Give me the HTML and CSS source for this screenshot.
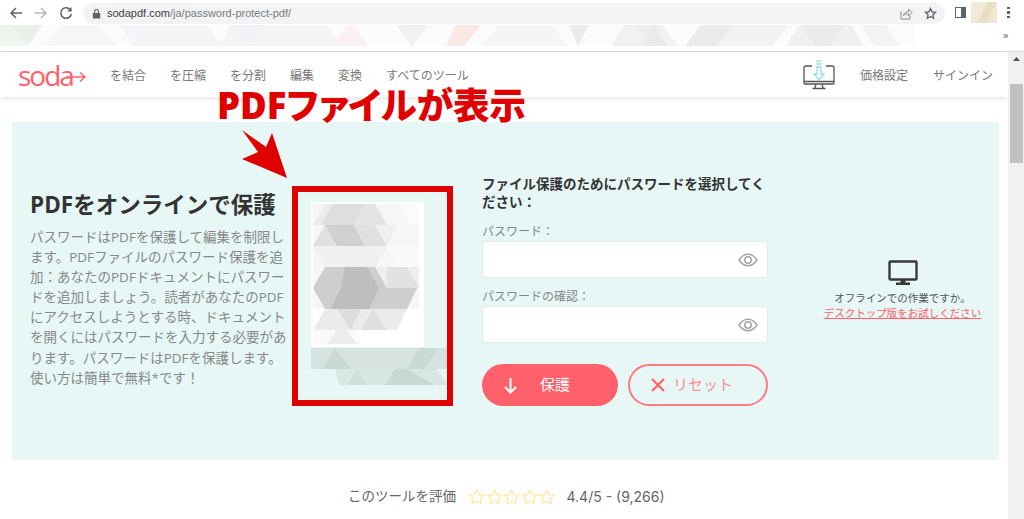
FILE: index.html
```html
<!DOCTYPE html>
<html lang="ja">
<head>
    <meta charset="UTF-8">
    <title>PDFをオンラインで保護</title>
    <link rel="stylesheet" href="styles.css">
</head>
<body>
    <div class="toolbar">
        <svg class="tool-icon" width="14" height="14" viewBox="0 0 14 14"><path d="M13 7H2M7 2L2 7l5 5" fill="none" stroke="#5f6368" stroke-width="1.5"/></svg>
        <svg class="tool-icon" width="14" height="14" viewBox="0 0 14 14"><path d="M1 7h11M7 2l5 5-5 5" fill="none" stroke="#b4b7ba" stroke-width="1.5"/></svg>
        <svg class="tool-icon" width="14" height="14" viewBox="0 0 14 14"><path d="M11.6 4.2A5.3 5.3 0 1 0 12.3 8" fill="none" stroke="#5f6368" stroke-width="1.5"/><path d="M12.6 1v4.4H8.2z" fill="#5f6368"/></svg>
        <div class="omnibox">
            <svg width="9" height="11" viewBox="0 0 9 11"><path d="M2 5V3.4a2.5 2.5 0 0 1 5 0V5h1.2v5.6H.8V5zm1.2 0h2.6V3.4a1.3 1.3 0 0 0-2.6 0z" fill="#5f6368"/></svg>
            <span class="url"><b>sodapdf.com</b>/ja/password-protect-pdf/</span>
            <span class="omni-right">
                <svg width="13" height="13" viewBox="0 0 13 13"><path d="M1 4.5v7.5h9V9M3.5 8.5C4 6 6 4.5 8.5 4.5V2L12 5.5 8.5 9V6.8C6.500 6.800 5 7.300 3.500 8.500z" fill="none" stroke="#8a8d91" stroke-width="1"/></svg>
                <svg width="13" height="13" viewBox="0 0 24 24"><path d="M12 3l2.800 6 6.500.8-4.800 4.400 1.300 6.500L12 17.400l-5.800 3.300 1.300-6.500L2.700 9.800 9.200 9z" fill="none" stroke="#5f6368" stroke-width="2.400"/></svg>
            </span>
        </div>
        <div class="side-icon"></div>
        <div class="avatar"></div>
        <div class="dots"><i></i><i></i><i></i></div>
    </div>
    <div class="bookmarks">
        <svg class="bookmark-mosaic" width="914" height="21" viewBox="0 0 914 21">
            <rect width="914" height="21" fill="#fbfbfb"/>
            <g class="soft">
                <polygon points="0,-2 42,-2 22,23 0,23" fill="#f0f4ef"/>
                <polygon points="10,-2 28,21 44,-2" fill="#eaf1ea"/>
                <polygon points="44,23 62,-2 98,-2 118,23" fill="#f6f6f6"/>
                <polygon points="150,-2 205,-2 225,23 130,23" fill="#f4f4f6"/>
                <polygon points="118,-2 150,-2 134,21" fill="#f3f5f8"/>
                <polygon points="232,-2 270,-2 285,23 218,23" fill="#f4f4f4"/>
                <polygon points="232,-2 250,21 268,-2" fill="#f0f2f7"/>
                <polygon points="268,-2 325,-2 342,23 252,23" fill="#f4f4f4"/>
                <polygon points="330,23 350,-2 370,23" fill="#fbf1f5"/>
                <polygon points="395,-2 430,-2 412,21" fill="#f1f1f1"/>
                <polygon points="456,-2 483,-2 462,23 446,23" fill="#fbe7e4"/>
                <polygon points="500,-2 550,-2 570,23 480,23" fill="#f5f5f5"/>
                <polygon points="568,-2 590,-2 578,21" fill="#eaebec"/>
                <polygon points="625,-2 660,-2 680,23 610,23" fill="#f1f1f1"/>
                <polygon points="632,-2 665,-2 648,21" fill="#eeeeee"/>
                <polygon points="642,23 654,-2 668,23" fill="#e9eaea"/>
                <polygon points="684,23 702,-2 735,-2 720,23" fill="#eaebeb"/>
                <polygon points="735,-2 790,-2 770,23 715,23" fill="#f2f2f2"/>
                <polygon points="800,-2 850,-2 865,23 785,23" fill="#f0f0f0"/>
                <polygon points="800,-2 815,21 830,21 845,-2" fill="#ebebeb"/>
                <polygon points="860,-2 885,-2 900,23 875,23" fill="#f3f3f3"/>
            </g>
        </svg>
        <span class="more">»</span>
    </div>
    <div class="page">
        <div class="content">
            <header class="nav">
                <a class="logo">soda<svg width="21" height="12" viewBox="0 0 21 12"><path d="M0 6h19M14 1.500l5 4.500-5 4.500" fill="none" stroke="#ff6069" stroke-width="1.500"/></svg></a>
                <nav class="nav-links">
                    <a>を結合</a><a>を圧縮</a><a>を分割</a><a>編集</a><a>変換</a><a>すべてのツール</a>
                </nav>
                <div class="nav-right">
                    <svg class="download-icon" width="32" height="30" viewBox="0 0 32 30">
                        <path d="M9 6H3a2 2 0 0 0-2 2v15a1 1 0 0 0 1 1h28a1 1 0 0 0 1-1V8a2 2 0 0 0-2-2h-6" fill="none" stroke="#555" stroke-width="1.300"/>
                        <path d="M1 21.500h30M13 24l-1 4M19 24l1 4M9.500 28.500h13" fill="none" stroke="#555" stroke-width="1.300"/>
                        <path d="M13.500 1h5M13.500 4h5M14 7h4v7h3l-5 6-5-6h3z" fill="none" stroke="#8fe3d9" stroke-width="1.300"/>
                    </svg>
                    <a class="price">価格設定</a>
                    <a>サインイン</a>
                </div>
            </header>
            <main class="panel">
                <section class="intro">
                    <h1>PDFをオンラインで保護</h1>
                    <p>パスワードはPDFを保護して編集を制限します。PDFファイルのパスワード保護を追加：あなたのPDFドキュメントにパスワードを追加しましょう。読者があなたのPDFにアクセスしようとする時、ドキュメントを開くにはパスワードを入力する必要があります。パスワードはPDFを保護します。使い方は簡単で無料*です！</p>
                </section>
                <section class="preview">
                    <svg class="thumb" width="113" height="145" viewBox="0 0 113 145">
                        <rect width="113" height="145" fill="#fff"/>
                        <g class="soft">
                            <polygon points="2,2 100,2 108,23 108,107 2,107" fill="#f6f6f6"/>
                            <polygon points="14,2 64,2 76,23 2,23" fill="#ececec"/>
                            <polygon points="22,2 54,2 42,23 10,23" fill="#dedede"/>
                            <polygon points="54,2 64,2 76,23 42,23" fill="#e4e4e4"/>
                            <polygon points="90,2 108,2 108,23 100,23" fill="#fbfbfb"/>
                            <polygon points="2,44 14,23 64,23 76,44" fill="#e0e0e0"/>
                            <polygon points="14,23 42,23 54,44 26,44" fill="#d0d0d0"/>
                            <polygon points="64,23 76,44 86,23" fill="#efefef"/>
                            <polygon points="2,44 76,44 64,65 14,65" fill="#f0f0f0"/>
                            <polygon points="76,44 108,44 108,65 86,65" fill="#fafafa"/>
                            <polygon points="14,65 108,65 108,86 2,86" fill="#eeeeee"/>
                            <polygon points="76,65 96,65 108,86 76,86" fill="#e2e2e2"/>
                            <polygon points="2,86 14,65 64,65 76,86 106,86 96,107 14,107" fill="#cecece"/>
                            <polygon points="34,65 56,65 68,86 58,107 20,107 30,86" fill="#bebebe"/>
                            <polygon points="2,128 14,107 26,128" fill="#ececec"/>
                            <polygon points="14,107 96,107 86,128 14,128" fill="#ebebeb"/>
                            <polygon points="26,107 50,107 40,128" fill="#dddddd"/>
                            <polygon points="62,107 76,128 50,128" fill="#dfdfdf"/>
                            <polygon points="2,128 46,128 50,142 2,142" fill="#fafafa"/>
                            <polygon points="16,142 26,128 36,128 46,142" fill="#ededed"/>
                        </g>
                    </svg>
                    <svg class="strip" width="136" height="40" viewBox="0 0 136 40">
                        <g class="soft">
                            <polygon points="0,1 136,1 136,22 0,22" fill="#d5e2e0"/>
                            <polygon points="12,22 24,1 40,22" fill="#c9d8d5"/>
                            <polygon points="96,22 108,1 126,1 114,22" fill="#c9d9d6"/>
                            <polygon points="24,22 126,22 136,38 28,38" fill="#d8e6e4"/>
                            <polygon points="74,38 84,22 96,22 124,38" fill="#c7d8d5"/>
                            <polygon points="36,38 46,22 56,38" fill="#cfe0dd"/>
                        </g>
                    </svg>
                </section>
                <form class="protect-form">
                    <h2>ファイル保護のためにパスワードを選択してください：</h2>
                    <label>パスワード：</label>
                    <div class="field">
                        <svg width="20" height="14" viewBox="0 0 20 14"><path d="M1 7c2.500-3.800 5.500-5.700 9-5.700s6.500 1.900 9 5.700c-2.500 3.800-5.500 5.700-9 5.700S3.500 10.800 1 7z" fill="none" stroke="#a5a5a5" stroke-width="1.500"/><circle cx="10" cy="7" r="3.200" fill="none" stroke="#a5a5a5" stroke-width="1.500"/></svg>
                    </div>
                    <label>パスワードの確認：</label>
                    <div class="field">
                        <svg width="20" height="14" viewBox="0 0 20 14"><path d="M1 7c2.500-3.800 5.500-5.700 9-5.700s6.500 1.900 9 5.700c-2.500 3.800-5.500 5.700-9 5.700S3.500 10.800 1 7z" fill="none" stroke="#a5a5a5" stroke-width="1.500"/><circle cx="10" cy="7" r="3.200" fill="none" stroke="#a5a5a5" stroke-width="1.500"/></svg>
                    </div>
                    <div class="buttons">
                        <button type="button" class="btn-protect">
                            <svg width="15" height="17" viewBox="0 0 15 17"><path d="M7.500 1v14M2 10l5.500 5.500L13 10" fill="none" stroke="#fff" stroke-width="2"/></svg>
                            <span>保護</span>
                        </button>
                        <button type="button" class="btn-reset">
                            <svg width="16" height="16" viewBox="0 0 16 16"><path d="M2 2l12 12M14 2L2 14" fill="none" stroke="#ff6069" stroke-width="2.200"/></svg>
                            <span>リセット</span>
                        </button>
                    </div>
                </form>
                <aside class="offline">
                    <svg width="30" height="25" viewBox="0 0 30 25"><path d="M2.500 1.500h25a1 1 0 0 1 1 1v16a1 1 0 0 1-1 1h-25a1 1 0 0 1-1-1v-16a1 1 0 0 1 1-1z" fill="none" stroke="#3a3a3a" stroke-width="2.400"/><path d="M12.500 20h5v2.500h-5zM8 22.500h14V25H8z" fill="#3a3a3a"/></svg>
                    <p>オフラインでの作業ですか。</p>
                    <a>デスクトップ版をお試しください</a>
                </aside>
            </main>
            <div class="rating">
                <span class="rating-label">このツールを評価</span>
                <span class="stars">
                    <svg viewBox="0 0 24 24"><path d="M12 2.500l2.900 6.300 6.900.8-5.100 4.700 1.400 6.800-6.100-3.400-6.100 3.400 1.400-6.800-5.100-4.700 6.900-.8z" fill="none" stroke="#ffe699" stroke-width="1.600"/></svg>
                    <svg viewBox="0 0 24 24"><path d="M12 2.500l2.900 6.300 6.900.8-5.100 4.700 1.400 6.800-6.100-3.400-6.100 3.400 1.400-6.800-5.100-4.700 6.900-.8z" fill="none" stroke="#ffe699" stroke-width="1.600"/></svg>
                    <svg viewBox="0 0 24 24"><path d="M12 2.500l2.900 6.300 6.900.8-5.100 4.700 1.400 6.800-6.100-3.400-6.100 3.400 1.400-6.800-5.100-4.700 6.900-.8z" fill="none" stroke="#ffe699" stroke-width="1.600"/></svg>
                    <svg viewBox="0 0 24 24"><path d="M12 2.500l2.900 6.300 6.900.8-5.100 4.700 1.400 6.800-6.100-3.400-6.100 3.400 1.400-6.800-5.100-4.700 6.900-.8z" fill="none" stroke="#ffe699" stroke-width="1.600"/></svg>
                    <svg viewBox="0 0 24 24"><path d="M12 2.500l2.900 6.300 6.900.8-5.100 4.700 1.400 6.800-6.100-3.400-6.100 3.400 1.400-6.800-5.100-4.700 6.900-.8z" fill="none" stroke="#ffe699" stroke-width="1.600"/></svg>
                </span>
                <span class="rating-score">4.4/5 - (9,266)</span>
            </div>
        </div>
        <div class="scrollbar">
            <svg width="7" height="4" viewBox="0 0 7 4"><path d="M3.500 0L7 4H0z" fill="#505050"/></svg>
            <div class="scroll-thumb"></div>
        </div>
    </div>

    <!-- red notes drawn over the screenshot -->
    <div class="note-title">PDFファイルが表示</div>
    <svg class="note-arrow" width="46" height="49" viewBox="0 0 46 49"><polygon points="0,0 24,17 30,3 45,48 0,29 16,22" fill="#e10000"/></svg>
    <div class="note-box"></div>
</body>
</html>
```

FILE: styles.css
```css
* {
    box-sizing: border-box;
}
html, body {
    height: 519px;
    overflow: hidden;
}
body {
    margin: 0;
    background: #fff;
    font-family: "Open Sans", "Noto Sans CJK JP", sans-serif;
    color: #777;
}
a {
    color: inherit;
}
.soft {
    filter: blur(0.7px);
}

/* browser chrome */
.toolbar {
    height: 25px;
    display: flex;
    align-items: center;
    padding-left: 9px;
    background: #fff;
}
.tool-icon {
    margin-right: 11px;
}
.tool-icon:nth-child(3) {
    margin-right: 10px;
}
.omnibox {
    width: 862px;
    height: 21px;
    margin: 1px 0 0 0;
    padding: 0 8px 0 9px;
    display: flex;
    align-items: center;
    gap: 6px;
    background: #f1f3f4;
    border-radius: 11px;
}
.url {
    font: 11px "Liberation Sans", sans-serif;
    color: #7a7d80;
}
.url b {
    font-weight: normal;
    color: #3c4043;
}
.omni-right {
    margin-left: auto;
    display: flex;
    gap: 11px;
}
.side-icon {
    width: 11px;
    height: 11px;
    margin-left: 10px;
    border: 1.500px solid #5f6368;
    border-right-width: 5px;
}
.avatar {
    width: 26px;
    height: 21px;
    margin-left: 5px;
    background: linear-gradient(115deg, #f2ead8 45%, #eadfc0 46%, #eadfc0 70%, #f0e8d2 71%);
}
.dots {
    margin-left: 10px;
    display: flex;
    flex-direction: column;
    gap: 2px;
}
.dots i {
    width: 2.500px;
    height: 2.500px;
    background: #5f6368;
}
.bookmarks {
    height: 27px;
    padding-bottom: 5px;
    display: flex;
    align-items: flex-start;
    background: #fff;
    border-bottom: 1px solid #dadce0;
}
.bookmark-mosaic {
    display: block;
}
.more {
    margin: 3px 0 0 89px;
    font-size: 11px;
    line-height: 14px;
    color: #5f6368;
}

/* page */
.page {
    height: 467px;
    display: flex;
}
.content {
    width: 1008px;
    display: flex;
    flex-direction: column;
}
.nav {
    height: 45px;
    flex: none;
    display: flex;
    align-items: center;
    padding: 0 15px 0 18px;
    font-size: 12px;
    box-shadow: 0 2px 5px rgba(0,0,0,0.1);
}
.logo {
    width: 92px;
    display: flex;
    align-items: center;
    font-size: 28px;
    letter-spacing: -2px;
    line-height: 40px;
    color: #ff6069;
}
.logo svg {
    margin: 5px 0 0 -7px;
}
.nav-links {
    display: flex;
    gap: 24px;
}
.nav-right {
    margin-left: auto;
    display: flex;
    align-items: center;
    gap: 25px;
}
.panel {
    height: 338px;
    margin: 25px 9px 0 12px;
    flex: none;
    display: flex;
    background: #e6f7f6;
}
.intro {
    width: 258px;
    margin: 68px 0 0 18px;
}
.intro h1 {
    margin: 0 0 7px;
    font-size: 22.500px;
    line-height: 30px;
    font-weight: 700;
    white-space: nowrap;
    color: #333;
}
.intro p {
    margin: 0;
    font-size: 13.500px;
    line-height: 20.100px;
    color: #888;
}
.preview {
    width: 171px;
    margin: 80px 0 0 23px;
    flex: none;
}
.thumb, .strip {
    display: block;
}
.protect-form {
    width: 286px;
    margin-top: 53px;
    flex: none;
}
.protect-form h2 {
    margin: 0 0 12px;
    font-size: 13.500px;
    line-height: 18px;
    font-weight: 700;
    color: #333;
}
.protect-form label {
    display: block;
    font-size: 12px;
    line-height: 18px;
    color: #888;
}
.field {
    height: 37px;
    margin: 0 0 10px;
    padding-right: 9px;
    display: flex;
    align-items: center;
    justify-content: flex-end;
    background: #fff;
    border: 1px solid #e2eeee;
    border-radius: 4px;
}
.buttons {
    margin-top: 21px;
    display: flex;
    gap: 10px;
}
.buttons button {
    height: 42px;
    display: flex;
    align-items: center;
    font: 15px "Open Sans", "Noto Sans CJK JP", sans-serif;
    border-radius: 21px;
}
.buttons span {
    margin-bottom: 4px;
}
.btn-protect {
    width: 136px;
    padding: 0 0 0 21px;
    gap: 22px;
    color: #fff;
    background: #ff6069;
    border: none;
}
.btn-reset {
    width: 140px;
    padding: 0 0 0 20px;
    gap: 7px;
    color: #ff8d93;
    background: transparent;
    border: 2px solid #ff7a81;
}
.offline {
    width: 157px;
    margin: 138px 0 0 56px;
    flex: none;
    display: flex;
    flex-direction: column;
    align-items: center;
    font-size: 10.500px;
    line-height: 15px;
    white-space: nowrap;
}
.offline p {
    margin: 6px 0 0;
    color: #555;
}
.offline a {
    color: #ff6069;
    text-decoration: underline;
}
.rating {
    margin-top: 27px;
    padding-left: 348px;
    display: flex;
    align-items: center;
    font-size: 13.500px;
    line-height: 19px;
    color: #666;
}
.stars {
    margin: 0 11px 0 12px;
    display: flex;
}
.stars svg {
    display: block;
    width: 17.500px;
    height: 18px;
}
.rating-score {
    font-family: Inter, sans-serif;
    font-size: 14px;
}
.scrollbar {
    width: 16px;
    background: #f1f1f1;
    display: flex;
    flex-direction: column;
    align-items: center;
    padding-top: 5px;
}
.scroll-thumb {
    width: 13px;
    height: 79px;
    margin-top: 23px;
    background: #c1c1c1;
}

/* annotations on top of the capture */
.note-title {
    position: absolute;
    left: 217px;
    top: 85px;
    font-size: 36.500px;
    line-height: 40px;
    font-weight: 900;
    font-feature-settings: "palt";
    white-space: nowrap;
    color: #e10000;
}
.note-arrow {
    position: absolute;
    left: 242px;
    top: 130px;
}
.note-box {
    position: absolute;
    left: 292px;
    top: 186px;
    width: 161px;
    height: 220px;
    border: 6px solid #e10000;
}
```
